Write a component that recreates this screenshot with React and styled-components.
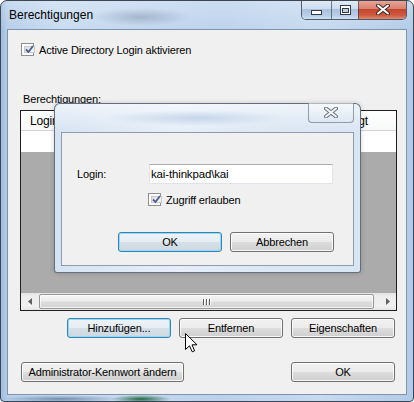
import React from 'react';
import styled, { createGlobalStyle } from 'styled-components';

const GlobalStyle = createGlobalStyle`
  html, body { margin: 0; padding: 0; background: #fff; }
  body { font-family: "Liberation Sans", Arial, sans-serif; font-size: 11px; color: #000; letter-spacing: -0.15px; }
`;

const Window = styled.div`
  position: relative;
  box-sizing: border-box;
  width: 414px;
  height: 402px;
  border: 1px solid #3d4650;
  border-radius: 7px 7px 4px 4px;
  overflow: hidden;
  display: flex;
  flex-direction: column;
  background:
    radial-gradient(ellipse 50px 9px at 140px 16px, rgba(95, 115, 140, 0.35), transparent),
    radial-gradient(ellipse 30px 4px at 140px 398px, rgba(20, 90, 50, 0.9), transparent),
    radial-gradient(ellipse 60px 4px at 60px 398px, rgba(60, 90, 130, 0.6), transparent),
    linear-gradient(180deg, rgba(255, 255, 255, 0.25), rgba(255, 255, 255, 0) 30px),
    linear-gradient(90deg, #9fbde0 0, #b7cfea 7px, #c8dcf1 60px, #bcd2ec 220px, #c6daf0 320px, #b2cbe8 100%);
`;

const TitleBar = styled.div`
  height: 28px;
  flex-shrink: 0;
  display: flex;
  align-items: center;
  padding: 0 6px 0 8px;
`;

const Title = styled.span`
  font-size: 12px;
  letter-spacing: 0;
  color: #000;
`;

const CaptionGroup = styled.div`
  margin-left: auto;
  align-self: flex-start;
  margin-top: -1px;
  display: flex;
  height: 19px;
  border: 1px solid rgba(40, 50, 65, 0.75);
  border-top: none;
  border-radius: 0 0 5px 5px;
  overflow: hidden;
`;

const CaptionButton = styled.div`
  width: ${p => p.$w}px;
  display: flex;
  align-items: center;
  justify-content: center;
  border-left: ${p => (p.$first ? 'none' : '1px solid rgba(40, 50, 65, 0.6)')};
  background: ${p =>
    p.$close
      ? 'linear-gradient(180deg, #e9a99b 0%, #d9826f 45%, #c4452f 50%, #cf5a3f 80%, #e3896b 100%)'
      : 'linear-gradient(180deg, #e4edf7 0%, #cddcee 45%, #aac2df 50%, #b7cce6 80%, #cfe0f2 100%)'};
`;

const Client = styled.div`
  flex: 1;
  margin: 0 6px 6px 6px;
  border: 1px solid #8193a9;
  background: #f0f0f0;
  display: flex;
  flex-direction: column;
`;

const CheckRow = styled.label`
  display: flex;
  align-items: center;
  gap: 5px;
  height: 13px;
  margin-top: ${p => p.$top}px;
  padding-left: ${p => p.$left}px;
`;

const Box = styled.span`
  box-sizing: border-box;
  width: 13px;
  height: 13px;
  border: 1px solid #8e8f8f;
  background: #fff;
  padding: 2px;
  display: flex;
`;

const BoxInner = styled.span`
  flex: 1;
  display: flex;
  align-items: center;
  justify-content: center;
  border: 1px solid #c6c9ce;
  background: linear-gradient(135deg, #dcdee1, #f8f8f8);
`;

const GroupLabel = styled.div`
  margin: 37px 0 0 15px;
  line-height: 13px;
`;

const Grid = styled.div`
  box-sizing: border-box;
  margin: 4px 0 0 12px;
  width: 377px;
  height: 201px;
  border: 1px solid #1e1e1e;
  display: flex;
  flex-direction: column;
  background: #ababab;
`;

const GridHeader = styled.div`
  height: 19px;
  flex-shrink: 0;
  border-bottom: 1px solid #d5d5d5;
  background: linear-gradient(180deg, #ffffff, #f7f8f9);
  display: flex;
  align-items: center;
  justify-content: space-between;
  padding: 0 28px 0 9px;
  font-size: 12px;
`;

const GridRow = styled.div`
  height: 21px;
  flex-shrink: 0;
  background: #fff;
`;

const GridEmpty = styled.div`
  flex: 1;
`;

const HScroll = styled.div`
  height: 17px;
  flex-shrink: 0;
  display: flex;
  align-items: center;
  background: linear-gradient(180deg, #e2e2e2, #ededed 3px, #f0f0f0 13px, #e6e6e6);
`;

const Arrow = styled.div`
  width: 17px;
  height: 17px;
  display: flex;
  align-items: center;
  justify-content: center;
`;

const Thumb = styled.div`
  box-sizing: border-box;
  flex: 1;
  height: 15px;
  margin: 0 5px 0 1px;
  border: 1px solid #979797;
  border-radius: 2px;
  background: linear-gradient(180deg, #f5f5f5 0%, #ececec 45%, #dcdcdc 55%, #d3d3d3 100%);
  box-shadow: inset 0 0 0 1px rgba(255, 255, 255, 0.7);
  display: flex;
  align-items: center;
  justify-content: center;
  gap: 1px;
`;

const Grip = styled.span`
  width: 1px;
  height: 6px;
  background: #5e5e5e;
  box-shadow: 1px 0 0 #fff;
  margin-right: 1px;
`;

const ButtonRow = styled.div`
  display: flex;
  gap: ${p => p.$gap || 8}px;
  justify-content: ${p => p.$justify || 'flex-start'};
  margin-top: ${p => p.$top}px;
  padding: 0 ${p => p.$right || 0}px 0 ${p => p.$left || 0}px;
`;

const Button = styled.button`
  box-sizing: border-box;
  width: ${p => p.$w}px;
  height: 20px;
  padding: 0;
  font: 11px "Liberation Sans", Arial, sans-serif;
  letter-spacing: -0.15px;
  color: #000;
  border: 1px solid ${p => (p.$focused ? '#3c7fb1' : '#707070')};
  border-radius: 3px;
  background: ${p =>
    p.$focused
      ? 'linear-gradient(180deg, #eef4f8 0%, #e5edf3 50%, #d6e0e8 50%, #cdd8e1 100%)'
      : 'linear-gradient(180deg, #f2f2f2 0%, #ebebeb 50%, #dddddd 50%, #cfcfcf 100%)'};
  box-shadow: inset 0 0 0 1px ${p => (p.$focused ? '#8fdcf7' : 'rgba(255, 255, 255, 0.85)')};
`;

const Modal = styled.div`
  position: absolute;
  left: 53px;
  top: 102px;
  width: 307px;
  height: 170px;
  box-sizing: border-box;
  border: 1px solid rgba(70, 80, 95, 0.8);
  border-radius: 6px 6px 3px 3px;
  display: flex;
  flex-direction: column;
  background:
    radial-gradient(ellipse 90px 8px at 140px 14px, rgba(150, 180, 215, 0.45), transparent),
    linear-gradient(180deg, rgba(255, 255, 255, 0.55), rgba(255, 255, 255, 0) 28px),
    linear-gradient(90deg, #d5e3f2, #e6eef8 40%, #dbe7f4 70%, #d8e5f3);
  box-shadow: 0 0 5px rgba(0, 0, 0, 0.18);
`;

const ModalTitle = styled.div`
  height: 28px;
  flex-shrink: 0;
  display: flex;
  justify-content: flex-end;
  padding-right: 6px;
`;

const ModalClose = styled.div`
  box-sizing: border-box;
  width: 46px;
  height: 20px;
  margin-top: -1px;
  border: 1px solid rgba(85, 95, 110, 0.6);
  border-top: none;
  border-radius: 0 0 4px 4px;
  display: flex;
  align-items: center;
  justify-content: center;
  background: linear-gradient(180deg, rgba(255, 255, 255, 0.5), rgba(215, 228, 242, 0.4));
`;

const ModalClient = styled.div`
  flex: 1;
  margin: 0 6px 6px 6px;
  border: 1px solid #8e9cae;
  background: #f0f0f0;
  display: flex;
  flex-direction: column;
`;

const FormRow = styled.div`
  display: flex;
  align-items: center;
  margin-top: 31px;
  padding-left: 15px;
`;

const FieldLabel = styled.span`
  width: 72px;
`;

const TextBox = styled.div`
  box-sizing: border-box;
  width: 184px;
  height: 20px;
  padding-left: 1px;
  display: flex;
  align-items: center;
  background: #fff;
  border: 1px solid #e2e3ea;
  border-top-color: #abadb3;
  font-size: 11.5px;
`;

const Cursor = styled.svg`
  position: absolute;
  left: 184px;
  top: 332px;
`;

const Check = () => (
  <Box>
    <BoxInner>
      <svg width="9" height="9" viewBox="0 0 9 9">
        <path d="M1 4.5 L3.5 7 L8 1" fill="none" stroke="#4a5f8e" strokeWidth="1.8" />
      </svg>
    </BoxInner>
  </Box>
);

export default function App() {
  return (
    <>
      <GlobalStyle />
      <Window>
        <TitleBar>
          <Title>Berechtigungen</Title>
          <CaptionGroup>
            <CaptionButton $w={29} $first>
              <svg width="11" height="5" viewBox="0 0 11 5" style={{ marginTop: 5 }}>
                <rect x="0.5" y="0.5" width="10" height="4" fill="#fff" stroke="#333a45" />
              </svg>
            </CaptionButton>
            <CaptionButton $w={26}>
              <svg width="11" height="10" viewBox="0 0 11 10">
                <rect x="0.5" y="0.5" width="10" height="9" fill="#fff" stroke="#333a45" />
                <rect x="2.5" y="3.5" width="6" height="4" fill="#b9cde6" stroke="#333a45" />
              </svg>
            </CaptionButton>
            <CaptionButton $w={47} $close>
              <svg width="14" height="11" viewBox="0 0 14 11">
                <path d="M2 1.5 L12 9.5 M12 1.5 L2 9.5" stroke="#3b2a2a" strokeWidth="4" strokeLinecap="round" />
                <path d="M2 1.5 L12 9.5 M12 1.5 L2 9.5" stroke="#fff" strokeWidth="2" strokeLinecap="round" />
              </svg>
            </CaptionButton>
          </CaptionGroup>
        </TitleBar>

        <Client>
          <CheckRow $top={13} $left={13}>
            <Check />
            <span>Active Directory Login aktivieren</span>
          </CheckRow>

          <GroupLabel>Berechtigungen:</GroupLabel>
          <Grid>
            <GridHeader>
              <span>Login</span>
              <span>Berechtigt</span>
            </GridHeader>
            <GridRow />
            <GridEmpty />
            <HScroll>
              <Arrow>
                <svg width="4" height="7" viewBox="0 0 4 7">
                  <path d="M4 0 L0 3.5 L4 7 Z" fill="#606060" />
                </svg>
              </Arrow>
              <Thumb>
                <Grip />
                <Grip />
                <Grip />
              </Thumb>
              <Arrow>
                <svg width="4" height="7" viewBox="0 0 4 7">
                  <path d="M0 0 L4 3.5 L0 7 Z" fill="#606060" />
                </svg>
              </Arrow>
            </HScroll>
          </Grid>

          <ButtonRow $top={7} $justify="flex-end" $right={11}>
            <Button $w={104} $focused>Hinzufügen...</Button>
            <Button $w={104}>Entfernen</Button>
            <Button $w={104}>Eigenschaften</Button>
          </ButtonRow>

          <ButtonRow $top={24} $justify="space-between" $left={13} $right={11}>
            <Button $w={163}>Administrator-Kennwort ändern</Button>
            <Button $w={104}>OK</Button>
          </ButtonRow>
        </Client>

        <Modal>
          <ModalTitle>
            <ModalClose>
              <svg width="14" height="11" viewBox="0 0 14 11">
                <path d="M2 1.5 L12 9.5 M12 1.5 L2 9.5" stroke="#6d7580" strokeWidth="4" strokeLinecap="round" />
                <path d="M2 1.5 L12 9.5 M12 1.5 L2 9.5" stroke="#f4f6f9" strokeWidth="2" strokeLinecap="round" />
              </svg>
            </ModalClose>
          </ModalTitle>
          <ModalClient>
            <FormRow>
              <FieldLabel>Login:</FieldLabel>
              <TextBox>{'kai-thinkpad\\kai'}</TextBox>
            </FormRow>
            <CheckRow $top={9} $left={86}>
              <Check />
              <span>Zugriff erlauben</span>
            </CheckRow>
            <ButtonRow $top={26} $left={56}>
              <Button $w={104} $focused>OK</Button>
              <Button $w={104}>Abbrechen</Button>
            </ButtonRow>
          </ModalClient>
        </Modal>

        <Cursor width="13" height="20" viewBox="0 0 13 20">
          <path
            d="M0.5 0.5 L0.5 16.5 L4.5 12.8 L7.2 18.8 L9.6 17.8 L7 11.8 L12 11.8 Z"
            fill="#fff"
            stroke="#000"
            strokeWidth="1"
            strokeLinejoin="miter"
          />
        </Cursor>
      </Window>
    </>
  );
}
